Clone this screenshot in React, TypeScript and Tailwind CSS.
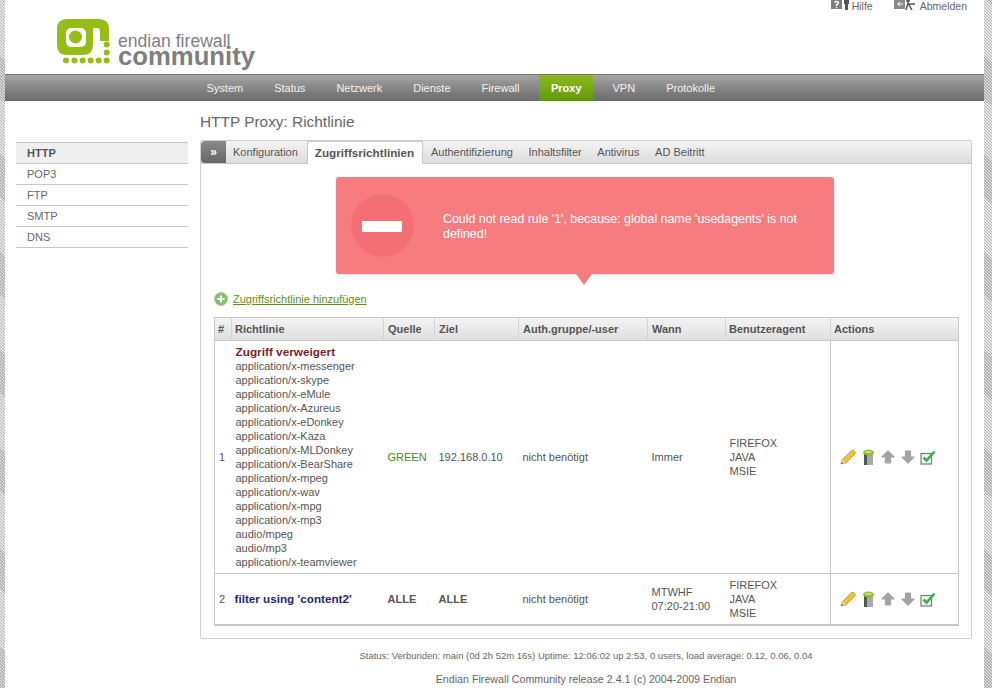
import React from 'react';

const navItems = ['System', 'Status', 'Netzwerk', 'Dienste', 'Firewall', 'Proxy', 'VPN', 'Protokolle'];
const sideItems = ['HTTP', 'POP3', 'FTP', 'SMTP', 'DNS'];
const tabs = ['Authentifizierung', 'Inhaltsfilter', 'Antivirus', 'AD Beitritt'];
const mimeTypes = [
  'application/x-messenger',
  'application/x-skype',
  'application/x-eMule',
  'application/x-Azureus',
  'application/x-eDonkey',
  'application/x-Kaza',
  'application/x-MLDonkey',
  'application/x-BearShare',
  'application/x-mpeg',
  'application/x-wav',
  'application/x-mpg',
  'application/x-mp3',
  'audio/mpeg',
  'audio/mp3',
  'application/x-teamviewer',
];

function Logo() {
  return (
    <svg width="56" height="46" viewBox="0 0 56 46" className="shrink-0">
      <path
        d="M10 0H42Q52 0 52 10V22H43V12Q43 9 40 9H36V26Q36 36 26 36H10Q0 36 0 26V10Q0 0 10 0Z"
        fill="#94bd16"
      />
      <rect x="9" y="9" width="20" height="19" rx="5" fill="#ffffff" />
      <circle cx="18.5" cy="18" r="6.5" fill="#94bd16" />
      <circle cx="49.7" cy="25.5" r="3" fill="#94bd16" />
      <circle cx="49.7" cy="33.6" r="3" fill="#94bd16" />
      {[9, 17.5, 25.7, 33.7, 41.7, 49.7].map((x) => (
        <circle key={x} cx={x} cy="41.6" r="3" fill="#94bd16" />
      ))}
    </svg>
  );
}

function ActionIcons() {
  return (
    <div className="flex items-center gap-[4px] pl-[9px]">
      {/* pencil */}
      <svg width="16" height="16" viewBox="0 0 16 16">
        <path d="M1 15L2.5 10.5L11.5 1.5Q13 0.5 14.5 2Q16 3.5 15 5L6 14Z" fill="#ecc23a" stroke="#b8922e" strokeWidth="0.7" />
        <path d="M2.5 10.5L6 14L1 15Z" fill="#e8cfa0" />
        <path d="M1 15L1.7 13L3 14.4Z" fill="#6b4a1c" />
      </svg>
      {/* bin */}
      <svg width="16" height="16" viewBox="0 0 16 16">
        <rect x="4" y="5" width="9" height="11" fill="#a9a9a9" />
        <rect x="4" y="5" width="3" height="11" fill="#4f5a4a" />
        <ellipse cx="8.5" cy="3.5" rx="5.5" ry="3" fill="#8fbc2d" />
        <ellipse cx="8.5" cy="3" rx="3.5" ry="1.2" fill="#c3e06a" />
      </svg>
      {/* up */}
      <svg width="16" height="16" viewBox="0 0 16 16">
        <path d="M8 2L14 8H10.5V14H5.5V8H2Z" fill="#a3a3a3" stroke="#a3a3a3" strokeWidth="1.2" strokeLinejoin="round" />
      </svg>
      {/* down */}
      <svg width="16" height="16" viewBox="0 0 16 16">
        <path d="M8 14L14 8H10.5V2H5.5V8H2Z" fill="#a3a3a3" stroke="#a3a3a3" strokeWidth="1.2" strokeLinejoin="round" />
      </svg>
      {/* checked */}
      <svg width="16" height="16" viewBox="0 0 16 16">
        <rect x="1" y="4.5" width="10.5" height="10.5" fill="#f1f6f3" stroke="#5b8a78" strokeWidth="1.2" />
        <path d="M3.5 8.5L6.5 11.5L14.5 2.5" fill="none" stroke="#3fae49" strokeWidth="2.6" />
      </svg>
    </div>
  );
}

const thClass = 'h-[23px] border-r border-[#d4d4d4] px-[4px] text-left align-middle font-bold text-[#555] last:border-r-0';
const hatchClass = 'shrink-0 bg-[repeating-linear-gradient(45deg,#b0b0b0_0,#b0b0b0_1px,#e8e8e8_1px,#e8e8e8_2.1px)]';

export default function App() {
  return (
    <div className="relative h-[688px] w-[992px] overflow-hidden bg-white font-['Liberation_Sans',Arial,sans-serif] text-[11px] text-[#555]">
      <div className="flex h-full">
        <div className={`w-[5px] ${hatchClass}`} />
        <div className="flex w-[979px] shrink-0 flex-col">
          {/* header */}
          <div className="relative h-[74px] shrink-0">
            <div className="flex items-start pl-[52px] pt-[19px]">
              <Logo />
              <div className="ml-[5px] mt-[12px] text-[#7f7f7f]">
                <div className="h-[12px] text-[17.6px] leading-[20px]">endian firewall</div>
                <div className="text-[25.7px] font-bold leading-[26px]">community</div>
              </div>
            </div>
            <div className="absolute right-[17px] top-0 flex items-start gap-[21px] text-[10.5px] leading-[12px] text-[#666]">
              <div className="flex items-start gap-[3px]">
                <svg width="18" height="10" viewBox="0 0 18 10">
                  <rect x="0" y="0" width="11" height="9" fill="#7d7d7d" />
                  <path d="M3.5 2.5Q5.5 0.5 7.5 2.5Q7.5 4 5.5 5V6" fill="none" stroke="#fff" strokeWidth="1.4" />
                  <rect x="4.8" y="7" width="1.4" height="1.4" fill="#fff" />
                  <rect x="13" y="0" width="5" height="4" fill="#555" />
                  <rect x="14" y="4" width="3" height="6" fill="#555" />
                </svg>
                <span>Hilfe</span>
              </div>
              <div className="flex items-start gap-[4px]">
                <svg width="22" height="10" viewBox="0 0 22 10">
                  <rect x="0" y="0" width="11" height="9" fill="#8a8a8a" />
                  <path d="M9 4H4M6 2L3.5 4L6 6" stroke="#fff" strokeWidth="1" fill="none" />
                  <circle cx="14" cy="1" r="1.8" fill="#555" />
                  <path d="M14 3L12 10M14 3L18 10M14 4H21" stroke="#555" strokeWidth="1.5" fill="none" />
                </svg>
                <span>Abmelden</span>
              </div>
            </div>
          </div>

          {/* nav */}
          <div className="flex h-[27px] shrink-0 items-stretch border-t border-t-[#777] bg-gradient-to-b from-[#a4a4a4] to-[#6a6a6a] pl-[186px]">
            {navItems.map((item) => (
              <div
                key={item}
                className={
                  item === 'Proxy'
                    ? 'ml-[4.5px] mr-[4px] flex items-center bg-gradient-to-b from-[#8fb81c] to-[#5f9a0e] px-[11.5px] font-bold text-white'
                    : 'flex items-center px-[15.5px] text-[#f2f2f2]'
                }
              >
                {item}
              </div>
            ))}
          </div>

          {/* body */}
          <div className="flex flex-1 pl-[11px]">
            <div className="mt-[41px] w-[172px] shrink-0">
              {sideItems.map((item, i) => (
                <div
                  key={item}
                  className={
                    i === 0
                      ? 'flex h-[22px] items-center border-y border-[#c8c8c8] bg-[#efefef] pl-[11px] font-bold text-[#555]'
                      : 'flex h-[21px] items-center border-b border-[#c8c8c8] pl-[11px] text-[#666]'
                  }
                >
                  {item}
                </div>
              ))}
            </div>

            <div className="ml-[12px] w-[772px] shrink-0">
              <h1 className="flex h-[39px] items-center pt-[3px] text-[15.4px] font-normal text-[#666]">HTTP Proxy: Richtlinie</h1>

              <div className="h-[499px] rounded-[2px] border border-[#cfcfcf]">
                {/* tabs */}
                <div className="flex h-[23px] items-stretch border-b border-[#c8c8c8] bg-gradient-to-b from-[#f4f4f4] to-[#dcdcdc]">
                  <div className="flex w-[25px] items-center justify-center rounded-l-[4px] bg-gradient-to-b from-[#8a8a8a] to-[#666] text-[12px] font-bold leading-none text-white">»</div>
                  <div className="flex items-center pl-[7px] pr-[9px]">Konfiguration</div>
                  <div className="-mb-[1px] flex items-center border-x border-t border-[#c8c8c8] bg-white pl-[7px] pr-[8px] text-[11.7px] font-bold text-[#555]">Zugriffsrichtlinien</div>
                  {tabs.map((tab) => (
                    <div key={tab} className="flex items-center px-[7.8px]">{tab}</div>
                  ))}
                </div>

                <div className="px-[13px]">
                  {/* alert */}
                  <div className="relative ml-[122px] mt-[13px] flex h-[97px] w-[498px] items-center rounded-[3px] bg-[#f67c80] shadow-[0_1px_2px_rgba(0,0,0,0.15)]">
                    <div className="ml-[15px] flex h-[63px] w-[63px] shrink-0 items-center justify-center rounded-full bg-[#f46f75]">
                      <div className="-ml-[1px] mt-[1px] h-[11px] w-[40px] bg-white" />
                    </div>
                    <p className="ml-[29px] mt-[2px] w-[380px] text-[12.4px] leading-[15px] text-white">Could not read rule '1', because: global name 'usedagents' is not defined!</p>
                    <div className="absolute left-[240px] top-full h-0 w-0 border-x-[8px] border-t-[11px] border-x-transparent border-t-[#f67c80]" />
                  </div>

                  {/* add link */}
                  <div className="mt-[17px] flex h-[16px] items-center gap-[5px]">
                    <svg width="14" height="14" viewBox="0 0 14 14">
                      <circle cx="7" cy="7" r="6.5" fill="#83c26b" stroke="#a9c9a0" />
                      <path d="M7 3.5V10.5M3.5 7H10.5" stroke="#fff" strokeWidth="2" />
                    </svg>
                    <span className="text-[#5a8f10] underline">Zugriffsrichtlinie hinzufügen</span>
                  </div>

                  {/* table */}
                  <table className="mt-[10px] w-[744px] table-fixed border-collapse border border-b-2 border-[#c8c8c8]">
                    <colgroup>
                      <col className="w-[17px]" />
                      <col className="w-[152px]" />
                      <col className="w-[51px]" />
                      <col className="w-[84px]" />
                      <col className="w-[129px]" />
                      <col className="w-[78px]" />
                      <col className="w-[105px]" />
                      <col className="w-[128px]" />
                    </colgroup>
                    <thead>
                      <tr className="bg-gradient-to-b from-[#f4f4f4] to-[#dedede]">
                        <th className="h-[23px] border-r border-[#d4d4d4] px-[3px] text-left align-middle font-bold text-[#555]">#</th>
                        <th className="h-[23px] border-r border-[#d4d4d4] px-[3px] text-left align-middle font-bold text-[#555]">Richtlinie</th>
                        <th className={thClass}>Quelle</th>
                        <th className={thClass}>Ziel</th>
                        <th className={thClass}>Auth.gruppe/-user</th>
                        <th className={thClass}>Wann</th>
                        <th className="h-[23px] border-r border-[#d4d4d4] px-[3px] text-left align-middle font-bold text-[#555]">Benutzeragent</th>
                        <th className="h-[23px] px-[3px] text-left align-middle font-bold text-[#555]">Actions</th>
                      </tr>
                    </thead>
                    <tbody className="leading-[14px]">
                      <tr className="h-[233px] border-t border-[#c8c8c8]">
                        <td className="px-[4px]">1</td>
                        <td className="px-[4px] pt-[4px] align-top">
                          <div className="text-[11.8px] font-bold text-[#7b1f26]">Zugriff verweigert</div>
                          {mimeTypes.map((m) => (
                            <div key={m}>{m}</div>
                          ))}
                        </td>
                        <td className="px-[4px] text-[#3b8a2e]">GREEN</td>
                        <td className="px-[4px]">192.168.0.10</td>
                        <td className="px-[4px]">nicht benötigt</td>
                        <td className="px-[4px]">Immer</td>
                        <td className="px-[4px]">
                          <div>FIREFOX</div>
                          <div>JAVA</div>
                          <div>MSIE</div>
                        </td>
                        <td className="border-l border-[#c8c8c8]"><ActionIcons /></td>
                      </tr>
                      <tr className="h-[51px] border-t border-[#c8c8c8]">
                        <td className="px-[4px]">2</td>
                        <td className="px-[3px] text-[11.7px] font-bold text-[#26267a]">filter using 'content2'</td>
                        <td className="px-[4px] font-bold">ALLE</td>
                        <td className="px-[4px] font-bold">ALLE</td>
                        <td className="px-[4px]">nicht benötigt</td>
                        <td className="px-[4px]">
                          <div>MTWHF</div>
                          <div>07:20-21:00</div>
                        </td>
                        <td className="px-[4px]">
                          <div>FIREFOX</div>
                          <div>JAVA</div>
                          <div>MSIE</div>
                        </td>
                        <td className="border-l border-[#c8c8c8]"><ActionIcons /></td>
                      </tr>
                    </tbody>
                  </table>
                </div>
              </div>

              <p className="mt-[10px] text-center text-[9.5px] text-[#666]">Status: Verbunden: main (0d 2h 52m 16s) Uptime: 12:06:02 up 2:53, 0 users, load average: 0.12, 0.06, 0.04</p>
              <p className="mt-[8px] text-center text-[10.7px] text-[#666]">Endian Firewall Community release 2.4.1 (c) 2004-2009 Endian</p>
            </div>
          </div>
        </div>
        <div className={`w-[8px] ${hatchClass}`} />
      </div>
    </div>
  );
}
